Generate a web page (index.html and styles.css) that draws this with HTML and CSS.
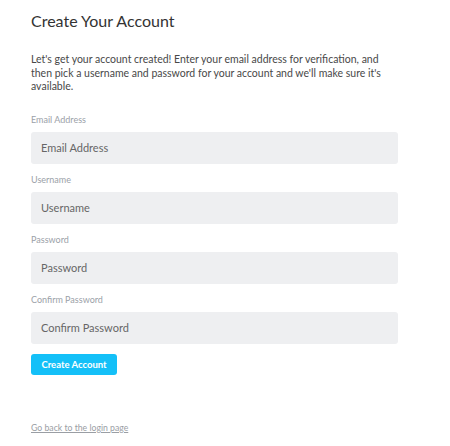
FILE: index.html
```html
<!DOCTYPE html>
<html>
<head>
<meta charset="utf-8">
<link rel="stylesheet" href="styles.css">
</head>
<body>
<main class="page">
  <h1 class="title">Create Your Account</h1>
  <p class="intro">Let's get your account created! Enter your email address for verification, and then pick a username and password for your account and we'll make sure it's available.</p>
  <form class="form">
    <div class="field">
      <label class="label">Email Address</label>
      <div class="input">Email Address</div>
    </div>
    <div class="field">
      <label class="label">Username</label>
      <div class="input">Username</div>
    </div>
    <div class="field">
      <label class="label">Password</label>
      <div class="input">Password</div>
    </div>
    <div class="field">
      <label class="label">Confirm Password</label>
      <div class="input">Confirm Password</div>
    </div>
    <div class="actions"><span class="button">Create Account</span></div>
  </form>
  <a class="back" href="#">Go back to the login page</a>
</main>
</body>
</html>
```

FILE: styles.css
```css
html, body {
  margin: 0;
  padding: 0;
  background: #fff;
}
body {
  font-family: Lato, "Open Sans", sans-serif;
}
.page {
  width: 367px;
  padding: 10px 0 0 31px;
  display: flex;
  flex-direction: column;
}
.title {
  margin: 0;
  font-size: 16px;
  line-height: 22px;
  font-weight: 400;
  color: #333;
}
.intro {
  margin: 21px 0 0;
  font-size: 10.5px;
  line-height: 13.5px;
  color: #484848;
}
.form {
  margin-top: 20px;
  display: flex;
  flex-direction: column;
  gap: 10px;
}
.field {
  display: flex;
  flex-direction: column;
  gap: 6px;
}
.label {
  font-size: 9px;
  line-height: 12px;
  color: #9ba1a8;
}
.input {
  height: 32px;
  box-sizing: border-box;
  padding: 0 10px;
  display: flex;
  align-items: center;
  background: #eeeff1;
  border-radius: 3px;
  font-size: 11px;
  color: #666;
}
.actions {
  display: flex;
}
.button {
  height: 21px;
  width: 86px;
  box-sizing: border-box;
  display: flex;
  align-items: center;
  justify-content: center;
  background: #14c0f8;
  color: #fff;
  border-radius: 3px;
  font-size: 9.5px;
  font-weight: 700;
}
.back {
  margin-top: 47px;
  align-self: flex-start;
  font-size: 8.7px;
  line-height: 12px;
  color: #9a9ea4;
  text-decoration: underline;
}
```
